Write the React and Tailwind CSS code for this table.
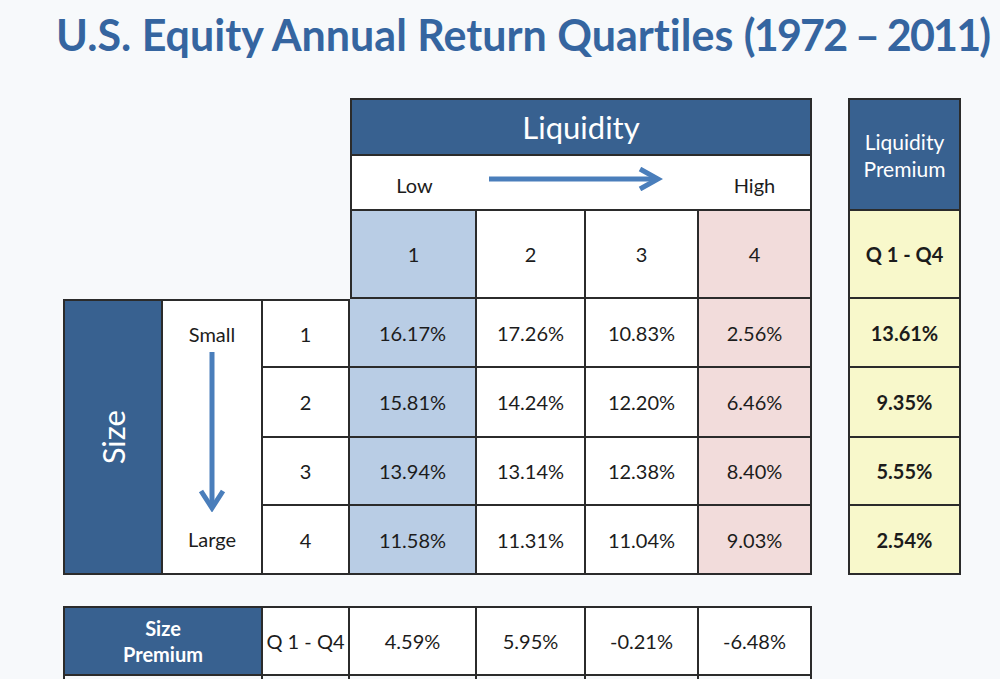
import React from 'react';

const line = 'border-[#2b2b2b]';

const Cell = ({ className = '', children }) => (
    <div className={`flex items-center justify-center ${line} ${className}`}>{children}</div>
);

const rows = [
    { n: 1, v: ['16.17%', '17.26%', '10.83%', '2.56%'], p: '13.61%' },
    { n: 2, v: ['15.81%', '14.24%', '12.20%', '6.46%'], p: '9.35%' },
    { n: 3, v: ['13.94%', '13.14%', '12.38%', '8.40%'], p: '5.55%' },
    { n: 4, v: ['11.58%', '11.31%', '11.04%', '9.03%'], p: '2.54%' },
];

const rowStart = ['row-start-4', 'row-start-5', 'row-start-6', 'row-start-7'];
const colStart = ['col-start-4', 'col-start-5', 'col-start-6', 'col-start-7'];
const colBg = ['bg-[#b9cde5]', 'bg-white', 'bg-white', 'bg-[#f2dcdb]'];

const RightArrow = () => (
    <svg width="174" height="24" viewBox="0 0 174 24" className="ml-[12px] mb-[7px]">
        <line x1="0" y1="12" x2="168" y2="12" stroke="#4a7ebb" strokeWidth="5" />
        <polyline points="151,2 169,12 151,22" fill="none" stroke="#4a7ebb" strokeWidth="5" />
    </svg>
);

const DownArrow = () => (
    <svg width="30" height="160" viewBox="0 0 30 160" className="mt-[6px]">
        <line x1="15" y1="0" x2="15" y2="154" stroke="#4a7ebb" strokeWidth="5" />
        <polyline points="4,139 15,156 26,139" fill="none" stroke="#4a7ebb" strokeWidth="5" />
    </svg>
);

export default function App() {
    return (
        <div className="w-[1000px] h-[679px] overflow-hidden bg-[#f7f9fb] font-['Lato',sans-serif] [font-variant-ligatures:none] text-[#1c1c1c]">
            <div className="h-[98px] pt-[13px] pl-[56px]">
                <h1 className="text-[43px] leading-none font-bold text-[#3565a0] whitespace-nowrap">
                    U.S. Equity Annual Return Quartiles <span className="tracking-[-1.8px]">(1972 – 2011)</span>
                </h1>
            </div>

            <div className="ml-[63px] grid grid-cols-[100px_100px_87px_127px_109px_113px_113px_36px_113px] grid-rows-[58px_55px_88px_69px_70px_68px_69px_31px_70px_20px] text-[20px]">
                {/* liquidity header */}
                <Cell className="col-start-4 col-span-4 row-start-1 border-2 bg-[#386190] text-white text-[31px]">
                    Liquidity
                </Cell>
                <div className={`col-start-4 col-span-4 row-start-2 border-l-2 border-r-2 border-b-2 ${line} bg-white flex items-center`}>
                    <div className="w-[125px] text-center pt-[5px]">Low</div>
                    <RightArrow />
                    <div className="ml-auto w-[111px] text-center pt-[5px]">High</div>
                </div>
                {[1, 2, 3, 4].map((n, i) => (
                    <Cell key={n} className={`${colStart[i]} row-start-3 border-r-2 border-b-2 ${i === 0 ? 'border-l-2' : ''} ${colBg[i]}`}>
                        {n}
                    </Cell>
                ))}

                {/* liquidity premium column */}
                <Cell className="col-start-9 row-start-1 row-span-2 border-2 bg-[#386190] text-white text-[21px] leading-[27px] flex-col">
                    <span>Liquidity</span>
                    <span>Premium</span>
                </Cell>
                <Cell className="col-start-9 row-start-3 border-l-2 border-r-2 border-b-2 bg-[#f8f8cb] font-bold">
                    Q 1 - Q4
                </Cell>

                {/* size block */}
                <Cell className="col-start-1 row-start-4 row-span-4 border-2 bg-[#386190] text-white text-[31px]">
                    <span className="-rotate-90 whitespace-nowrap">Size</span>
                </Cell>
                <div className={`col-start-2 row-start-4 row-span-4 border-t-2 border-r-2 border-b-2 ${line} bg-white flex flex-col items-center pt-[21px]`}>
                    <div className="leading-[24px]">Small</div>
                    <DownArrow />
                    <div className="leading-[24px] mt-[15px]">Large</div>
                </div>

                {rows.map((r, ri) => (
                    <React.Fragment key={r.n}>
                        <Cell className={`col-start-3 ${rowStart[ri]} border-r-2 border-b-2 ${ri === 0 ? 'border-t-2' : ''} bg-white`}>
                            {r.n}
                        </Cell>
                        {r.v.map((v, ci) => (
                            <Cell key={ci} className={`${colStart[ci]} ${rowStart[ri]} border-r-2 border-b-2 ${colBg[ci]}`}>
                                {v}
                            </Cell>
                        ))}
                        <Cell className={`col-start-9 ${rowStart[ri]} border-l-2 border-r-2 border-b-2 bg-[#f8f8cb] font-bold`}>
                            {r.p}
                        </Cell>
                    </React.Fragment>
                ))}

                {/* size premium row */}
                <Cell className="col-start-1 col-span-2 row-start-9 border-2 bg-[#386190] text-white font-bold leading-[26px] flex-col">
                    <span>Size</span>
                    <span>Premium</span>
                </Cell>
                <Cell className="col-start-3 row-start-9 border-t-2 border-r-2 border-b-2 bg-white">Q 1 - Q4</Cell>
                {['4.59%', '5.95%', '-0.21%', '-6.48%'].map((v, ci) => (
                    <Cell key={ci} className={`${colStart[ci]} row-start-9 border-t-2 border-r-2 border-b-2 bg-white`}>
                        {v}
                    </Cell>
                ))}

                {/* next row, cut off by the frame */}
                <div className={`col-start-1 col-span-2 row-start-10 border-l-2 border-r-2 ${line}`} />
                <div className={`col-start-3 row-start-10 border-r-2 ${line}`} />
                {colStart.map((c) => (
                    <div key={c} className={`${c} row-start-10 border-r-2 ${line}`} />
                ))}
            </div>
        </div>
    );
}
